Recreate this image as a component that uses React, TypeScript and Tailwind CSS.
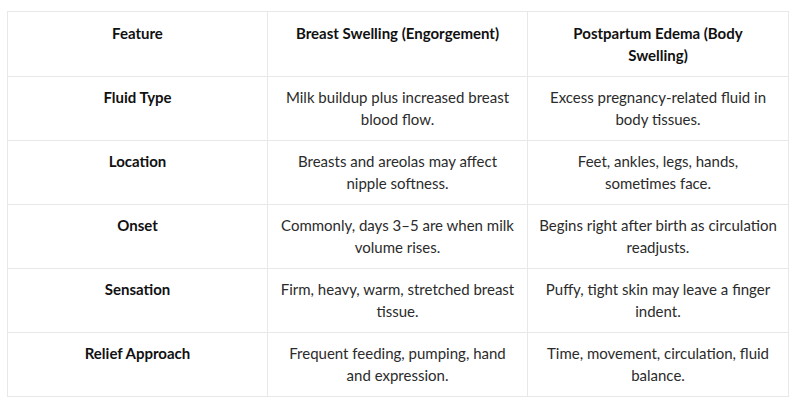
const header = ["Feature", "Breast Swelling (Engorgement)", "Postpartum Edema (Body|Swelling)"];

const rows: [string, string, string][] = [
  ["Fluid Type", "Milk buildup plus increased breast|blood flow.", "Excess pregnancy-related fluid in|body tissues."],
  ["Location", "Breasts and areolas may affect|nipple softness.", "Feet, ankles, legs, hands,|sometimes face."],
  ["Onset", "Commonly, days 3–5 are when milk|volume rises.", "Begins right after birth as circulation|readjusts."],
  ["Sensation", "Firm, heavy, warm, stretched breast|tissue.", "Puffy, tight skin may leave a finger|indent."],
  ["Relief Approach", "Frequent feeding, pumping, hand|and expression.", "Time, movement, circulation, fluid|balance."],
];

function Lines({ text }: { text: string }) {
  return (
    <>
      {text.split("|").map((l) => (
        <span key={l} className="block whitespace-nowrap">
          {l}
        </span>
      ))}
    </>
  );
}

export default function App() {
  return (
    <div className="bg-white w-[796px] h-[403px] pt-[11px] pl-[7px]" style={{ fontFamily: "Lato, 'Open Sans', sans-serif" }}>
      <table className="border-collapse table-fixed w-[781px] text-[15px] leading-[22px] text-[#2b2b2b]">
        <colgroup>
          <col className="w-[260px]" />
          <col className="w-[260px]" />
          <col className="w-[261px]" />
        </colgroup>
        <thead>
          <tr className="h-[65px]">
            {header.map((h) => (
              <th key={h} className="border border-[#e6e8ea] align-top text-center font-bold text-[#111] px-[10px] pt-[10px] pb-[10px]">
                <Lines text={h} />
              </th>
            ))}
          </tr>
        </thead>
        <tbody>
          {rows.map(([a, b, c]) => (
            <tr key={a} className="h-[64px]">
              <td className="border border-[#e6e8ea] align-top text-center font-bold text-[#111] px-[10px] pt-[9px] pb-[10px]">{a}</td>
              <td className="border border-[#e6e8ea] align-top text-center px-[10px] pt-[9px] pb-[10px]">
                <Lines text={b} />
              </td>
              <td className="border border-[#e6e8ea] align-top text-center px-[10px] pt-[9px] pb-[10px]">
                <Lines text={c} />
              </td>
            </tr>
          ))}
        </tbody>
      </table>
    </div>
  );
}
